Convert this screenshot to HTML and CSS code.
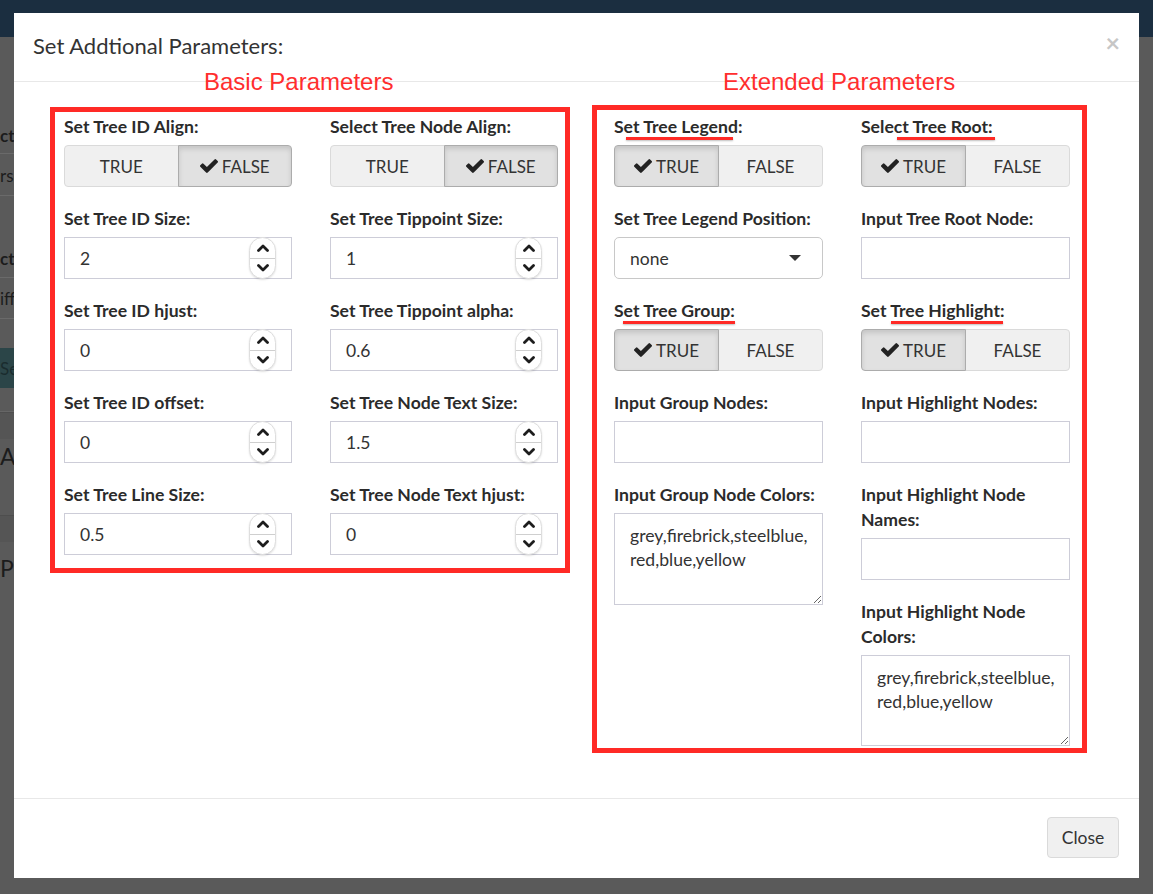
FILE: index.html
```html
<!DOCTYPE html>
<html>
<head>
<meta charset="utf-8">
<title>Set Addtional Parameters</title>
<link rel="stylesheet" href="styles.css">
</head>
<body>
<div class="page">
  <div class="topbar"></div>
  <div class="behind">
    <div class="side">
      <div class="s-row s-r1"><span class="s-bold">ct</span></div>
      <div class="s-row s-r2"><span>rsc</span></div>
      <div class="s-row s-r3"><span class="s-bold">ct</span></div>
      <div class="s-row s-r4"><span>ifft</span></div>
      <div class="s-gap s-g1"></div>
      <div class="s-btn"><span>Se</span></div>
      <div class="s-gap s-g2"></div>
      <div class="s-band"></div>
      <div class="s-big s-b1"><span>An</span></div>
      <div class="s-band"></div>
      <div class="s-big s-b2"><span>Plo</span></div>
    </div>
  </div>
</div>

<div class="modal">
  <div class="modal-header">
    <h4 class="modal-title">Set Addtional Parameters:</h4>
    <span class="close">×</span>
  </div>

  <div class="modal-body">
    <div class="box box-basic">
      <div class="col">
        <div class="fg">
          <label class="lbl">Set Tree ID Align:</label>
          <div class="btn-group">
            <span class="bt">TRUE</span>
            <span class="bt active"><svg class="check" viewBox="121 334 1550 1188"><path d="M1671 566q0 40-28 68l-724 724-136 136q-28 28-68 28t-68-28l-136-136-362-362q-28-28-28-68t28-68l136-136q28-28 68-28t68 28l294 295 656-657q28-28 68-28t68 28l136 136q28 28 28 68z"/></svg>FALSE</span>
          </div>
        </div>
        <div class="fg">
          <label class="lbl">Set Tree ID Size:</label>
          <div class="num"><span class="val">2</span><span class="stepper"><span class="st-half"><svg class="chev" viewBox="0 0 12 8"><polyline points="1.5,6.5 6,2 10.5,6.5"/></svg></span><span class="st-div"></span><span class="st-half"><svg class="chev" viewBox="0 0 12 8"><polyline points="1.5,1.5 6,6 10.5,1.5"/></svg></span></span></div>
        </div>
        <div class="fg">
          <label class="lbl">Set Tree ID hjust:</label>
          <div class="num"><span class="val">0</span><span class="stepper"><span class="st-half"><svg class="chev" viewBox="0 0 12 8"><polyline points="1.5,6.5 6,2 10.5,6.5"/></svg></span><span class="st-div"></span><span class="st-half"><svg class="chev" viewBox="0 0 12 8"><polyline points="1.5,1.5 6,6 10.5,1.5"/></svg></span></span></div>
        </div>
        <div class="fg">
          <label class="lbl">Set Tree ID offset:</label>
          <div class="num"><span class="val">0</span><span class="stepper"><span class="st-half"><svg class="chev" viewBox="0 0 12 8"><polyline points="1.5,6.5 6,2 10.5,6.5"/></svg></span><span class="st-div"></span><span class="st-half"><svg class="chev" viewBox="0 0 12 8"><polyline points="1.5,1.5 6,6 10.5,1.5"/></svg></span></span></div>
        </div>
        <div class="fg">
          <label class="lbl">Set Tree Line Size:</label>
          <div class="num"><span class="val">0.5</span><span class="stepper"><span class="st-half"><svg class="chev" viewBox="0 0 12 8"><polyline points="1.5,6.5 6,2 10.5,6.5"/></svg></span><span class="st-div"></span><span class="st-half"><svg class="chev" viewBox="0 0 12 8"><polyline points="1.5,1.5 6,6 10.5,1.5"/></svg></span></span></div>
        </div>
      </div>
      <div class="col">
        <div class="fg">
          <label class="lbl">Select Tree Node Align:</label>
          <div class="btn-group">
            <span class="bt">TRUE</span>
            <span class="bt active"><svg class="check" viewBox="121 334 1550 1188"><path d="M1671 566q0 40-28 68l-724 724-136 136q-28 28-68 28t-68-28l-136-136-362-362q-28-28-28-68t28-68l136-136q28-28 68-28t68 28l294 295 656-657q28-28 68-28t68 28l136 136q28 28 28 68z"/></svg>FALSE</span>
          </div>
        </div>
        <div class="fg">
          <label class="lbl">Set Tree Tippoint Size:</label>
          <div class="num"><span class="val">1</span><span class="stepper"><span class="st-half"><svg class="chev" viewBox="0 0 12 8"><polyline points="1.5,6.5 6,2 10.5,6.5"/></svg></span><span class="st-div"></span><span class="st-half"><svg class="chev" viewBox="0 0 12 8"><polyline points="1.5,1.5 6,6 10.5,1.5"/></svg></span></span></div>
        </div>
        <div class="fg">
          <label class="lbl">Set Tree Tippoint alpha:</label>
          <div class="num"><span class="val">0.6</span><span class="stepper"><span class="st-half"><svg class="chev" viewBox="0 0 12 8"><polyline points="1.5,6.5 6,2 10.5,6.5"/></svg></span><span class="st-div"></span><span class="st-half"><svg class="chev" viewBox="0 0 12 8"><polyline points="1.5,1.5 6,6 10.5,1.5"/></svg></span></span></div>
        </div>
        <div class="fg">
          <label class="lbl">Set Tree Node Text Size:</label>
          <div class="num"><span class="val">1.5</span><span class="stepper"><span class="st-half"><svg class="chev" viewBox="0 0 12 8"><polyline points="1.5,6.5 6,2 10.5,6.5"/></svg></span><span class="st-div"></span><span class="st-half"><svg class="chev" viewBox="0 0 12 8"><polyline points="1.5,1.5 6,6 10.5,1.5"/></svg></span></span></div>
        </div>
        <div class="fg">
          <label class="lbl">Set Tree Node Text hjust:</label>
          <div class="num"><span class="val">0</span><span class="stepper"><span class="st-half"><svg class="chev" viewBox="0 0 12 8"><polyline points="1.5,6.5 6,2 10.5,6.5"/></svg></span><span class="st-div"></span><span class="st-half"><svg class="chev" viewBox="0 0 12 8"><polyline points="1.5,1.5 6,6 10.5,1.5"/></svg></span></span></div>
        </div>
      </div>
    </div>

    <div class="box box-ext">
      <div class="col">
        <div class="fg">
          <label class="lbl">Set Tree Legend:<span class="mark mark-legend"></span></label>
          <div class="btn-group">
            <span class="bt active"><svg class="check" viewBox="121 334 1550 1188"><path d="M1671 566q0 40-28 68l-724 724-136 136q-28 28-68 28t-68-28l-136-136-362-362q-28-28-28-68t28-68l136-136q28-28 68-28t68 28l294 295 656-657q28-28 68-28t68 28l136 136q28 28 28 68z"/></svg>TRUE</span>
            <span class="bt">FALSE</span>
          </div>
        </div>
        <div class="fg">
          <label class="lbl nowrap">Set Tree Legend Position:</label>
          <div class="select"><span class="val">none</span><svg class="caret" viewBox="0 0 12 6"><polygon points="0,0 12,0 6,6"/></svg></div>
        </div>
        <div class="fg">
          <label class="lbl">Set Tree Group:<span class="mark mark-group"></span></label>
          <div class="btn-group">
            <span class="bt active"><svg class="check" viewBox="121 334 1550 1188"><path d="M1671 566q0 40-28 68l-724 724-136 136q-28 28-68 28t-68-28l-136-136-362-362q-28-28-28-68t28-68l136-136q28-28 68-28t68 28l294 295 656-657q28-28 68-28t68 28l136 136q28 28 28 68z"/></svg>TRUE</span>
            <span class="bt">FALSE</span>
          </div>
        </div>
        <div class="fg">
          <label class="lbl">Input Group Nodes:</label>
          <div class="txt"></div>
        </div>
        <div class="fg">
          <label class="lbl">Input Group Node Colors:</label>
          <textarea class="ta ta-a">grey,firebrick,steelblue,
red,blue,yellow</textarea>
        </div>
      </div>
      <div class="col">
        <div class="fg">
          <label class="lbl">Select Tree Root:<span class="mark mark-root"></span></label>
          <div class="btn-group">
            <span class="bt active"><svg class="check" viewBox="121 334 1550 1188"><path d="M1671 566q0 40-28 68l-724 724-136 136q-28 28-68 28t-68-28l-136-136-362-362q-28-28-28-68t28-68l136-136q28-28 68-28t68 28l294 295 656-657q28-28 68-28t68 28l136 136q28 28 28 68z"/></svg>TRUE</span>
            <span class="bt">FALSE</span>
          </div>
        </div>
        <div class="fg">
          <label class="lbl">Input Tree Root Node:</label>
          <div class="txt"></div>
        </div>
        <div class="fg">
          <label class="lbl">Set Tree Highlight:<span class="mark mark-high"></span></label>
          <div class="btn-group">
            <span class="bt active"><svg class="check" viewBox="121 334 1550 1188"><path d="M1671 566q0 40-28 68l-724 724-136 136q-28 28-68 28t-68-28l-136-136-362-362q-28-28-28-68t28-68l136-136q28-28 68-28t68 28l294 295 656-657q28-28 68-28t68 28l136 136q28 28 28 68z"/></svg>TRUE</span>
            <span class="bt">FALSE</span>
          </div>
        </div>
        <div class="fg">
          <label class="lbl">Input Highlight Nodes:</label>
          <div class="txt"></div>
        </div>
        <div class="fg">
          <label class="lbl">Input Highlight Node Names:</label>
          <div class="txt"></div>
        </div>
        <div class="fg">
          <label class="lbl">Input Highlight Node Colors:</label>
          <textarea class="ta ta-b">grey,firebrick,steelblue,
red,blue,yellow</textarea>
        </div>
      </div>
    </div>
  </div>

  <div class="modal-footer">
    <button class="btn-close" type="button">Close</button>
  </div>

  <div class="note note-basic">Basic Parameters</div>
  <div class="note note-ext">Extended Parameters</div>
</div>
</body>
</html>
```

FILE: styles.css
```css
* { box-sizing: border-box; }

html, body {
  margin: 0;
  padding: 0;
}

body {
  font-family: Lato, "Open Sans", "Liberation Sans", sans-serif;
  background: #5a5a5a;
  color: #333;
  overflow: hidden;
  width: 1153px;
  height: 894px;
}

/* ---------- dimmed page behind the modal ---------- */
.page {
  height: 894px;
  display: flex;
  flex-direction: column;
}

.topbar {
  height: 37px;
  flex: none;
  background: #1b2e40;
}

.behind {
  flex: 1;
  display: flex;
}

.side {
  width: 60px;
  display: flex;
  flex-direction: column;
  white-space: nowrap;
  color: #1c1c1c;
  font-size: 17px;
}

.s-row {
  display: flex;
  align-items: flex-end;
  border-bottom: 1px solid #6a6a6a;
}

.s-row span { display: block; }
.s-bold { font-weight: 700; }

.s-r1 { height: 117px; padding-bottom: 7px; }
.s-r2 { height: 42px; padding-bottom: 9px; }
.s-r3 { height: 82px; padding-bottom: 8px; }
.s-r4 { height: 41px; padding-bottom: 9px; }

.s-gap { flex: none; }
.s-g1 { height: 29px; }
.s-g2 { height: 24px; border-bottom: 1px solid #666; }

.s-btn {
  height: 40px;
  background: #2b4548;
  color: #1a2c2e;
  display: flex;
  align-items: center;
}

.s-band {
  height: 27px;
  background: #555;
  border-top: 1px solid #4e4e4e;
}

.s-big {
  font-size: 23px;
  display: flex;
  align-items: flex-start;
}

.s-b1 { height: 76px; padding-top: 3px; }
.s-b2 { height: 70px; padding-top: 12px; }

/* ---------- modal ---------- */
.modal {
  position: absolute;
  left: 14px;
  top: 13px;
  width: 1125px;
  height: 865px;
  background: #fff;
  display: flex;
  flex-direction: column;
}

.modal-header {
  flex: none;
  display: flex;
  justify-content: space-between;
  align-items: flex-start;
  padding: 20px 19px 22px 19px;
  border-bottom: 1px solid #e8e8e8;
}

.modal-title {
  margin: 0;
  font-size: 22px;
  line-height: 26px;
  font-weight: 400;
  color: #333;
}

.close {
  font-size: 25px;
  line-height: 26px;
  font-weight: 700;
  color: #c6c6c6;
  margin-top: -4px;
  margin-right: 0;
}

.modal-body {
  flex: 1;
  display: flex;
  align-items: flex-start;
  gap: 22px;
  padding: 23px 0 0 36px;
}

.modal-footer {
  flex: none;
  display: flex;
  justify-content: flex-end;
  padding: 18px 20px 20px;
  border-top: 1px solid #e8e8e8;
}

.btn-close {
  width: 72px;
  height: 41px;
  font-family: Lato, "Open Sans", sans-serif;
  font-size: 17.5px;
  color: #333;
  background: #f0f0f0;
  border: 1px solid #dadada;
  border-radius: 4px;
  padding: 0;
}

/* ---------- annotation overlays ---------- */
.note {
  position: absolute;
  top: 57px;
  font-family: "Liberation Sans", Arial, sans-serif;
  font-size: 24px;
  line-height: 24px;
  color: #ff2e2e;
  white-space: nowrap;
}

.note-basic { left: 190px; }
.note-ext { left: 709px; }

.box {
  border: 5px solid #ff2a26;
  display: flex;
  align-items: flex-start;
  gap: 38px;
}

.box-basic {
  width: 520px;
  margin-top: 2px;
  padding: 2px 7px 13px 9px;
}

.box-basic .col { width: 228px; }

.box-ext {
  width: 495px;
  padding: 4px 12px 2px 17px;
}

.box-ext .col { width: 209px; }

.col {
  display: flex;
  flex-direction: column;
  gap: 19px;
}

/* ---------- form controls ---------- */
.fg {
  display: flex;
  flex-direction: column;
}

.lbl {
  position: relative;
  display: block;
  font-size: 17.6px;
  line-height: 25px;
  font-weight: 700;
  color: #2b2b2b;
  margin-bottom: 6px;
}

.nowrap { white-space: nowrap; }

.mark {
  position: absolute;
  top: 23px;
  height: 3px;
  background: #ff2a26;
  box-shadow: 0 1px 2px rgba(0, 0, 0, 0.25);
}

.mark-legend { left: 12px; width: 107px; }
.mark-root { left: 36px; width: 98px; }
.mark-group { left: 9px; width: 112px; }
.mark-high { left: 30px; width: 112px; }

.btn-group {
  display: flex;
  height: 42px;
}

.bt {
  flex: 1;
  display: flex;
  align-items: center;
  justify-content: center;
  font-size: 17px;
  color: #333;
  background: #f0f0f0;
  border: 1px solid #dadada;
}

.bt:first-child { border-radius: 4px 0 0 4px; }
.bt:last-child { border-radius: 0 4px 4px 0; margin-left: -1px; }

.bt.active {
  background: #e1e1e1;
  border-color: #acacac;
  box-shadow: inset 0 3px 5px rgba(0, 0, 0, 0.125);
  position: relative;
}

.check {
  width: 18px;
  height: 14px;
  margin-right: 4px;
  fill: #222;
}

.num, .txt, .select {
  height: 42px;
  border: 1px solid #cdcdd8;
  display: flex;
  align-items: center;
  justify-content: space-between;
  font-size: 17.5px;
  color: #333;
  background: #fff;
}

.num { padding: 0 15px; }

.stepper {
  width: 27px;
  height: 42px;
  margin: -1px 0;
  display: flex;
  flex-direction: column;
  border: 1px solid #dedede;
  border-radius: 14px;
  background: #fff;
  box-shadow: 0 1px 2px rgba(0, 0, 0, 0.12);
  overflow: hidden;
}

.st-half {
  flex: 1;
  display: flex;
  align-items: center;
  justify-content: center;
}

.st-div {
  height: 1px;
  background: #cfcfcf;
  flex: none;
}

.chev {
  width: 12px;
  height: 8px;
  fill: none;
  stroke: #1d1d1d;
  stroke-width: 2.8;
  stroke-linecap: round;
  stroke-linejoin: round;
}

.select {
  border-color: #c8c8c8;
  border-radius: 5px;
  padding: 0 21px 0 15px;
}

.caret {
  width: 12px;
  height: 6px;
  fill: #333;
}

.ta {
  display: block;
  width: 100%;
  margin: 0;
  border: 1px solid #cdcdd8;
  padding: 10px 4px 7px 15px;
  font-family: Lato, "Open Sans", sans-serif;
  font-size: 17.6px;
  line-height: 24px;
  color: #333;
  resize: vertical;
  overflow: hidden;
  white-space: pre;
}

.ta-a { height: 92px; }
.ta-b { height: 91px; }
```
